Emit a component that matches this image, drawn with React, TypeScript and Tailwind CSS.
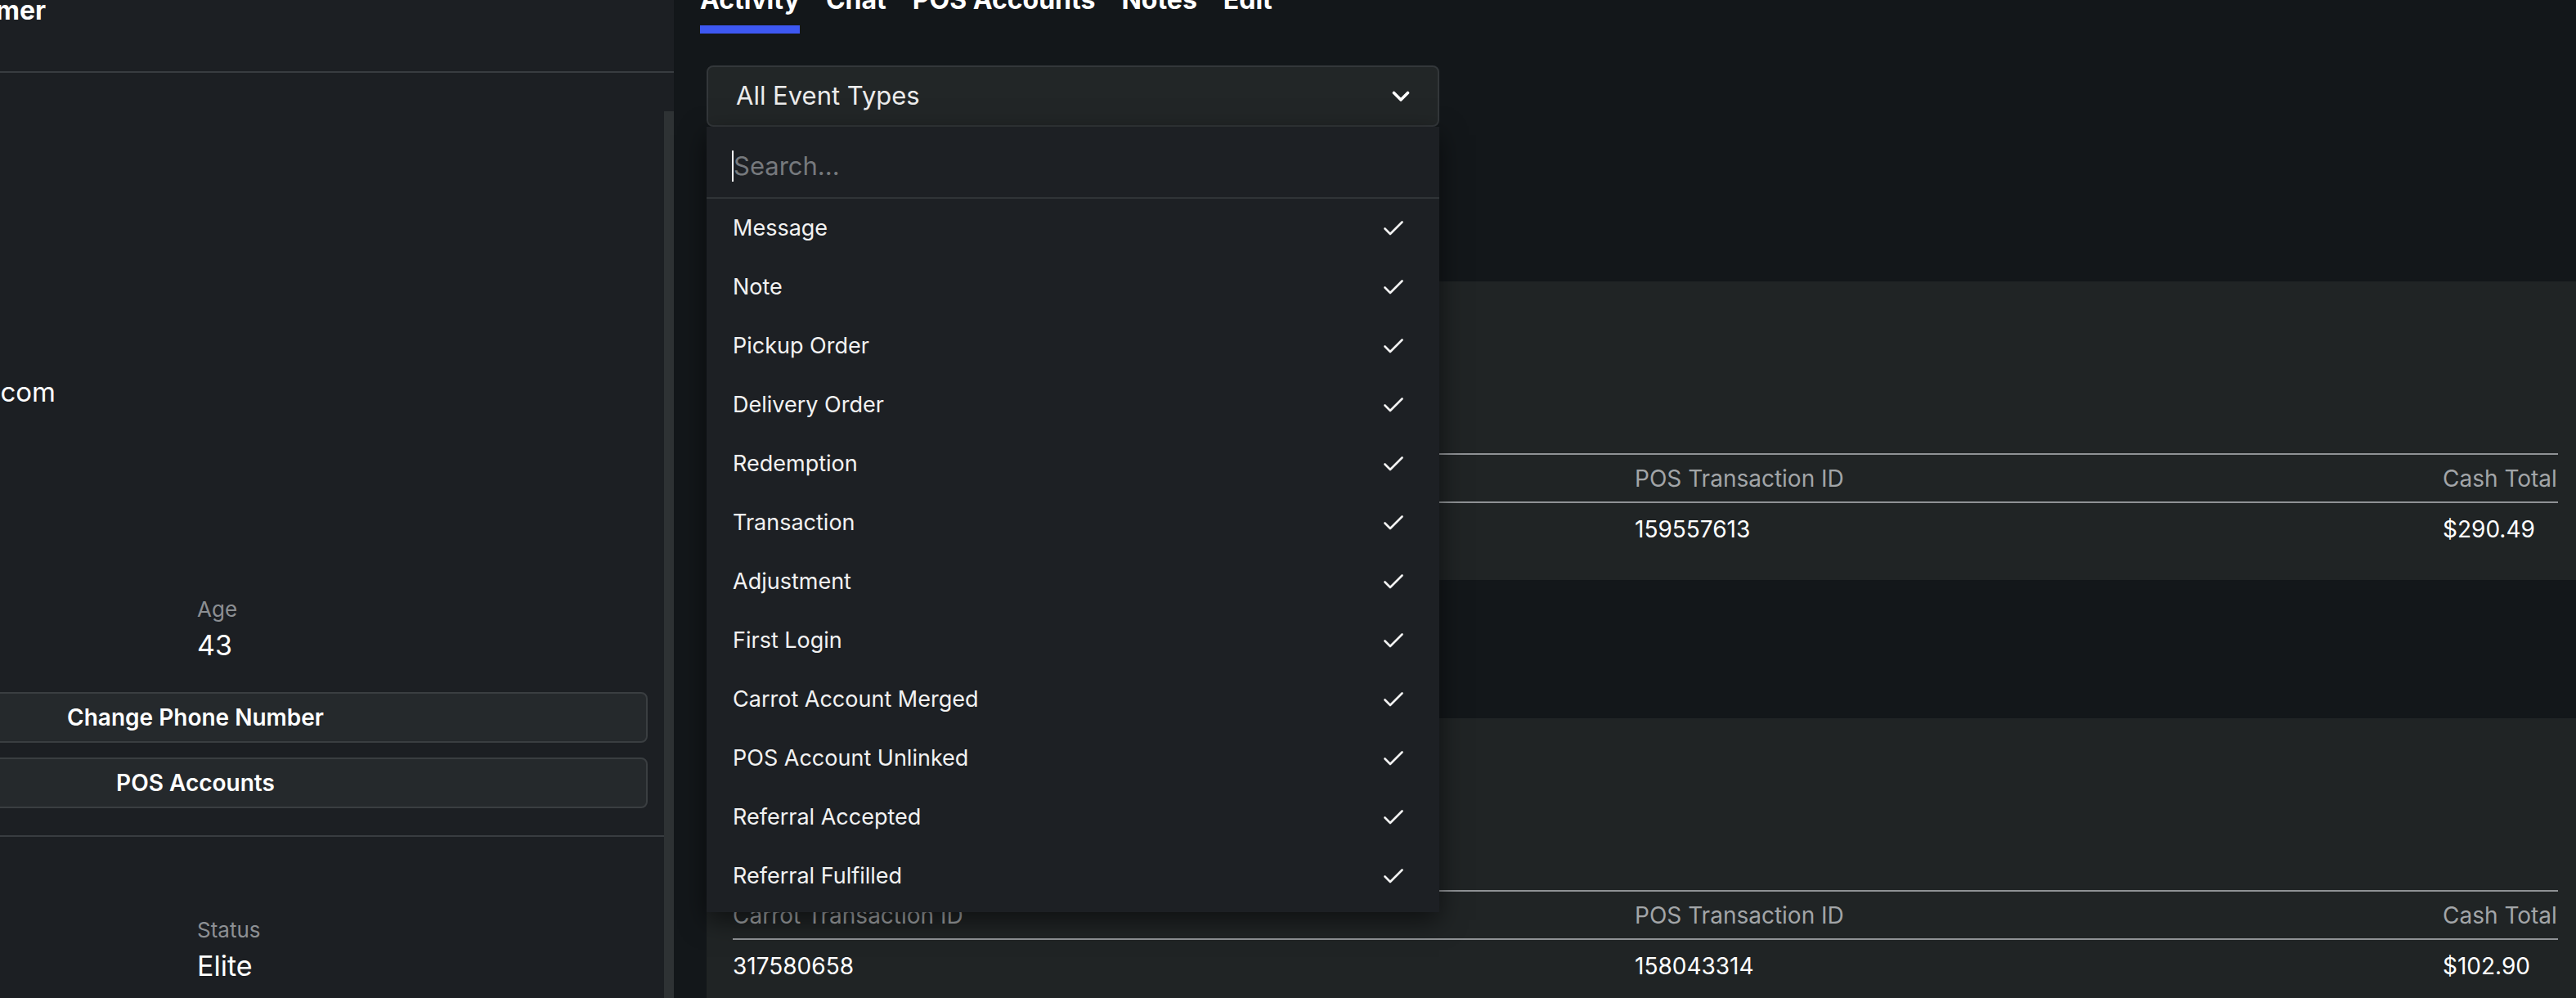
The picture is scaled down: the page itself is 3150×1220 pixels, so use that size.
import React from 'react'

const TABS = ['Activity', 'Chat', 'POS Accounts', 'Notes', 'Edit']

const EVENT_TYPES = [
  'Message',
  'Note',
  'Pickup Order',
  'Delivery Order',
  'Redemption',
  'Transaction',
  'Adjustment',
  'First Login',
  'Carrot Account Merged',
  'POS Account Unlinked',
  'Referral Accepted',
  'Referral Fulfilled',
]

const TRANSACTIONS = [
  { carrotId: '318204417', posId: '159557613', total: '$290.49' },
  { carrotId: '317580658', posId: '158043314', total: '$102.90' },
]

const Check = () => (
  <svg width="24" height="18" viewBox="0 0 24 18" fill="none">
    <path d="M1.5 9.5 8 16 22.5 1.5" stroke="#f2f2f2" strokeWidth="2.6" strokeLinecap="round" strokeLinejoin="round" />
  </svg>
)

const Chevron = () => (
  <svg width="22" height="14" viewBox="0 0 22 14" fill="none">
    <path d="M2.5 2.5 11 11l8.5-8.5" stroke="#ffffff" strokeWidth="3.6" strokeLinecap="round" strokeLinejoin="round" />
  </svg>
)

function Field({ label, value, className = '' }: { label: string; value: string; className?: string }) {
  return (
    <div className={className}>
      <div className="text-[26px] leading-[36px] text-[#8c8f93]">{label}</div>
      <div className="mt-[4px] text-[34px] leading-[44px] text-white">{value}</div>
    </div>
  )
}

function CustomerPanel() {
  return (
    <aside className="relative w-[824px] h-full shrink-0 overflow-hidden bg-[#1c1f23]">
      {/* scrollbar */}
      <div className="absolute right-0 top-[136px] bottom-0 w-[12px] bg-[#2e3234] z-10" />

      <div className="-ml-[334px] w-[1158px]">
        {/* Header */}
        <div className="h-[92px] border-b-2 border-[#383c40] px-[20px]">
          <h2 className="-mt-[3px] w-[370px] text-right whitespace-nowrap text-[32px] leading-[32px] font-bold text-white">
            Customer
          </h2>
        </div>

        <div className="w-[1146px] px-[20px]">
          {/* Email */}
          <div className="mt-[328px] w-[382px]">
            <div className="text-[26px] leading-[36px] text-[#8c8f93]">Email</div>
            <div className="mt-[4px] flex justify-end whitespace-nowrap text-[33px] leading-[44px] text-white">
              <span>dana.whitfield82@gmail.com</span>
            </div>
          </div>

          {/* Birthday / Age */}
          <div className="mt-[226px] grid grid-cols-2 gap-x-[4px]">
            <Field label="Birthday" value="04/12/1981" />
            <Field label="Age" value="43" />
          </div>

          {/* Actions */}
          <div className="mt-[35px] flex flex-col gap-[18px]">
            <button className="h-[62px] w-full rounded-[8px] border-2 border-[#3a3e41] bg-[#25292c] text-[28px] font-semibold text-white">
              Change Phone Number
            </button>
            <button className="h-[62px] w-full rounded-[8px] border-2 border-[#3a3e41] bg-[#25292c] text-[28px] font-semibold text-white">
              POS Accounts
            </button>
          </div>

          <div className="mt-[33px] -mx-[20px] h-[2px] bg-[#383c40]" />

          {/* Loyalty */}
          <div className="mt-[96px] grid grid-cols-2 gap-x-[4px]">
            <Field label="Points" value="1,240" />
            <Field label="Status" value="Elite" />
          </div>
        </div>
      </div>
    </aside>
  )
}

function TransactionCard({ tx, className = '' }: { tx: (typeof TRANSACTIONS)[number]; className?: string }) {
  return (
    <div className={`ml-[40px] w-[2296px] bg-[#202425] px-[32px] pt-[210px] pb-[30px] ${className}`}>
      <div className="border-t-2 border-[#8f9295]">
        <div className="grid h-[59px] grid-cols-[1103px_988px_1fr] items-center border-b-2 border-[#8f9295] text-[28px] text-[#a2a5a8]">
          <span>Carrot Transaction ID</span>
          <span>POS Transaction ID</span>
          <span>Cash Total</span>
        </div>
        <div className="grid h-[64px] grid-cols-[1103px_988px_1fr] items-center text-[28px] text-white">
          <span>{tx.carrotId}</span>
          <span>{tx.posId}</span>
          <span>{tx.total}</span>
        </div>
      </div>
    </div>
  )
}

export default function App() {
  return (
    <div className="flex h-[1220px] w-[3150px] overflow-hidden bg-[#13171a] font-['Inter','Noto_Sans',sans-serif]">
      <CustomerPanel />

      <main className="min-w-0 flex-1 h-full">
        {/* Tabs */}
        <nav className="-mt-[16px] ml-[32px] flex gap-[32px]">
          {TABS.map((tab) => (
            <div key={tab} className="flex flex-col">
              <span className="whitespace-nowrap text-[32px] leading-[32px] font-bold text-white">{tab}</span>
              <span className={`mt-[15px] h-[10px] ${tab === 'Activity' ? 'bg-[#3d58f2]' : ''}`} />
            </div>
          ))}
        </nav>

        {/* Event type filter */}
        <div className="relative z-20 ml-[40px] mt-[39px] w-[896px]">
          <div className="flex h-[75px] items-center justify-between rounded-[8px] border-2 border-[#33373a] bg-[#222627] pl-[34px] pr-[34px]">
            <span className="text-[31px] text-[#ececec]">All Event Types</span>
            <Chevron />
          </div>

          <div className="absolute left-0 top-[75px] w-full bg-[#1d2024] pb-[8px] shadow-[0_10px_30px_rgba(0,0,0,0.55)]">
            <div className="flex h-[88px] items-center border-b-2 border-[#303437] pl-[31px] pt-[10px]">
              <span className="h-[38px] w-[2px] bg-white" />
              <span className="text-[31px] text-[#76797d]">Search...</span>
            </div>
            {EVENT_TYPES.map((type) => (
              <div key={type} className="flex h-[72px] items-center justify-between pl-[32px] pr-[44px]">
                <span className="text-[27px] text-[#f2f2f2]">{type}</span>
                <Check />
              </div>
            ))}
          </div>
        </div>

        {/* Activity feed */}
        <TransactionCard tx={TRANSACTIONS[0]} className="mt-[189px]" />
        <TransactionCard tx={TRANSACTIONS[1]} className="mt-[169px]" />
      </main>
    </div>
  )
}
